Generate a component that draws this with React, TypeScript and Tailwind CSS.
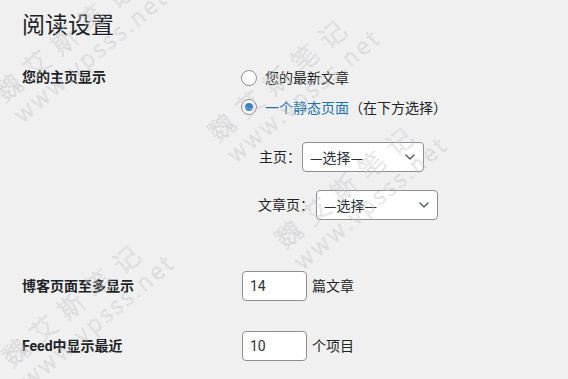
import React from 'react';
import { ChevronDown } from 'lucide-react';

const FONT = "font-['Roboto','Noto_Sans_CJK_SC',sans-serif]";

const Watermark: React.FC<{ left: number; top: number }> = ({ left, top }) => (
  <div
    className="pointer-events-none absolute origin-top-left -rotate-[40deg] whitespace-nowrap font-['Noto_Sans_CJK_SC',sans-serif] font-light leading-[28px] text-transparent [-webkit-text-stroke:0.4px_#c6c6c6]"
    style={{ left, top }}
  >
    <div className="text-[26px] tracking-[10px]">魏艾斯笔记</div>
    <div className="text-[23px] tracking-[3px]">www.vpsss.net</div>
  </div>
);

const Radio: React.FC<{ checked?: boolean }> = ({ checked }) => (
  <span className="flex h-4 w-4 shrink-0 items-center justify-center rounded-full border border-[#8c8f94] bg-white">
    {checked && <span className="h-2 w-2 rounded-full bg-[#3582c4]" />}
  </span>
);

const Select: React.FC = () => (
  <div className="flex h-[30px] w-[122px] items-center justify-between rounded-[4px] border border-[#8c8f94] bg-white pl-[7px] pr-[5px]">
    <span className="font-['Noto_Sans_CJK_SC',sans-serif] text-[14px] text-[#2c3338]">—选择—</span>
    <ChevronDown size={16} strokeWidth={2} className="text-[#50575e]" />
  </div>
);

const NumberBox: React.FC<{ value: string }> = ({ value }) => (
  <div className="flex h-[30px] w-[65px] items-center rounded-[4px] border border-[#8c8f94] bg-white pl-[7px] text-[14px] text-[#2c3338]">
    {value}
  </div>
);

export default function App() {
  return (
    <div className={`relative h-[379px] w-[568px] overflow-hidden bg-[#f0f0f1] text-[#1d2327] ${FONT}`}>
      <div className="pl-[22px] pt-[9px]">
        <h1 className="font-['Noto_Sans_CJK_SC',sans-serif] text-[23px] font-normal leading-[29px]">阅读设置</h1>

        <div className="mt-[29px] flex">
          <div className="w-[219px] text-[14px] font-bold leading-[20px]">您的主页显示</div>
          <div className="text-[14px] leading-[20px]">
            <label className="mt-[1px] flex h-[20px] items-center gap-[8px]">
              <Radio />
              <span>您的最新文章</span>
            </label>
            <label className="mt-[9px] flex h-[20px] items-center gap-[8px]">
              <Radio checked />
              <span className="font-['Noto_Sans_CJK_SC',sans-serif]">
                <span className="text-[#2271b1]">一个静态页面</span>（在下方选择）
              </span>
            </label>
            <div className="mt-[25px] flex flex-col gap-[18px] pl-[18px]">
              <div className="flex items-center gap-[1px]">
                <span>主页：</span>
                <Select />
              </div>
              <div className="-ml-[1px] flex items-center gap-[2px]">
                <span>文章页：</span>
                <Select />
              </div>
            </div>
          </div>
        </div>

        <div className="mt-[51px] flex items-center">
          <div className="w-[220px] text-[14px] font-bold">博客页面至多显示</div>
          <NumberBox value="14" />
          <span className="ml-[5px] text-[14px]">篇文章</span>
        </div>

        <div className="mt-[30px] flex items-center">
          <div className="w-[220px] text-[14px] font-bold">Feed中显示最近</div>
          <NumberBox value="10" />
          <span className="ml-[5px] text-[14px]">个项目</span>
        </div>
      </div>

      <Watermark left={-11} top={84} />
      <Watermark left={202} top={124} />
      <Watermark left={269} top={231} />
      <Watermark left={-4} top={349} />
    </div>
  );
}
